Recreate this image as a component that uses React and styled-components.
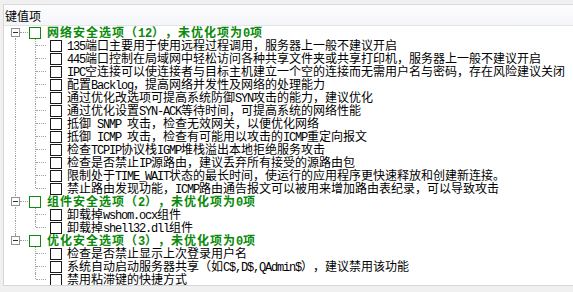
import React from 'react'
import styled, { createGlobalStyle } from 'styled-components'

const GlobalStyle = createGlobalStyle`
  html, body {
    margin: 0;
    padding: 0;
    background: #f0f0f0;
    overflow: hidden;
  }
  body {
    font-family: "Noto Sans CJK SC", "Noto Sans", sans-serif;
    font-size: 12px;
    color: #000;
    text-spacing-trim: space-all;
    font-kerning: none;
  }
`

const Panel = styled.div`
  box-sizing: border-box;
  margin: 4px 0 0 3px;
  height: 282px;
  background: #fff;
  border-top: 1px solid #dadada;
  border-left: 1px solid #d6d6d6;
  border-bottom: 1px solid #d6d6d6;
  overflow: hidden;
`

const Header = styled.div`
  height: 20px;
  display: flex;
  align-items: center;
  padding-left: 1px;
  background: linear-gradient(#fdfdfe, #f4f5f9);
  border-bottom: 1px solid #e4e4e8;
`

const HeaderLabel = styled.span`
  font-size: 12px;
  line-height: 13px;
`

const TreeBody = styled.div`
  padding-top: 0;
`

const Row = styled.div`
  display: flex;
  align-items: flex-start;
  height: 13px;
  white-space: nowrap;
`

const dotted = '1px dotted #a0a0a0'

const GroupGuide = styled.div`
  position: relative;
  flex: none;
  width: 24px;
  height: 13px;
  &::before {
    content: '';
    position: absolute;
    left: 11px;
    top: ${p => (p.$first ? '6px' : '0')};
    bottom: ${p => (p.$last ? '7px' : '0')};
    border-left: ${dotted};
  }
  &::after {
    content: '';
    position: absolute;
    left: 16px;
    top: 6px;
    width: 8px;
    border-top: ${dotted};
  }
`

const Expander = styled.span`
  position: absolute;
  z-index: 1;
  left: 7px;
  top: 2px;
  box-sizing: border-box;
  width: 9px;
  height: 9px;
  background: #fff;
  border: 1px solid #929292;
  &::after {
    content: '';
    position: absolute;
    left: 1px;
    top: 3px;
    width: 5px;
    height: 1px;
    background: #303030;
  }
`

const Pipe = styled.div`
  position: relative;
  flex: none;
  width: 24px;
  height: 13px;
  &::before {
    content: '';
    display: ${p => (p.$show ? 'block' : 'none')};
    position: absolute;
    left: 11px;
    top: 0;
    bottom: 0;
    border-left: ${dotted};
  }
`

const Branch = styled.div`
  position: relative;
  flex: none;
  width: 21px;
  height: 13px;
  &::before {
    content: '';
    position: absolute;
    left: 7px;
    top: 0;
    bottom: ${p => (p.$last ? '7px' : '0')};
    border-left: ${dotted};
  }
  &::after {
    content: '';
    position: absolute;
    left: 8px;
    top: 6px;
    width: 10px;
    border-top: ${dotted};
  }
`

const Check = styled.span`
  flex: none;
  box-sizing: border-box;
  width: 12px;
  height: 12px;
  margin-top: 1px;
  margin-left: 1px;
  background: #fff;
  border: 1px solid ${p => (p.$group ? '#0b8a0b' : '#1a1a1a')};
`

const Label = styled.span`
  margin-left: ${p => (p.$group ? '6px' : '5px')};
  font-size: 12px;
  line-height: 11px;
  font-weight: ${p => (p.$group ? 700 : 400)};
  letter-spacing: ${p => (p.$group ? '1px' : '0')};
  color: ${p => (p.$group ? '#0a8a0a' : '#000')};
`

const Ascii = styled.span`
  font-family: "Liberation Mono", "DejaVu Sans Mono", monospace;
  font-size: 12px;
  letter-spacing: ${p => (p.$group ? '-0.2px' : '-1.2px')};
  white-space: pre;
`

const groups = [
  {
    title: '网络安全选项（12），未优化项为0项',
    items: [
      '135端口主要用于使用远程过程调用，服务器上一般不建议开启',
      '445端口控制在局域网中轻松访问各种共享文件夹或共享打印机，服务器上一般不建议开启',
      'IPC空连接可以使连接者与目标主机建立一个空的连接而无需用户名与密码，存在风险建议关闭',
      '配置Backlog，提高网络并发性及网络的处理能力',
      '通过优化改选项可提高系统防御SYN攻击的能力，建议优化',
      '通过优化设置SYN-ACK等待时间，可提高系统的网络性能',
      '抵御 SNMP 攻击，检查无效网关，以便优化网络',
      '抵御 ICMP 攻击，检查有可能用以攻击的ICMP重定向报文',
      '检查TCPIP协议栈IGMP堆栈溢出本地拒绝服务攻击',
      '检查是否禁止IP源路由，建议丢弃所有接受的源路由包',
      '限制处于TIME_WAIT状态的最长时间，使运行的应用程序更快速释放和创建新连接。',
      '禁止路由发现功能，ICMP路由通告报文可以被用来增加路由表纪录，可以导致攻击',
    ],
  },
  {
    title: '组件安全选项（2），未优化项为0项',
    items: ['卸载掉wshom.ocx组件', '卸载掉shell32.dll组件'],
  },
  {
    title: '优化安全选项（3），未优化项为0项',
    items: [
      '检查是否禁止显示上次登录用户名',
      '系统自动启动服务器共享（如C$,D$,QAdmin$），建议禁用该功能',
      '禁用粘滞键的快捷方式',
    ],
  },
]

// half-width runs get a mono face so they take 6px per char like the original
function Mixed({ text, group }) {
  return text.split(/([\x20-\x7e]+)/).map((part, i) =>
    /^[\x20-\x7e]+$/.test(part)
      ? <Ascii key={i} $group={group}>{part}</Ascii>
      : part
  )
}

export default function App() {
  return (
    <>
      <GlobalStyle />
      <Panel>
        <Header>
          <HeaderLabel>键值项</HeaderLabel>
        </Header>
        <TreeBody>
          {groups.map((g, gi) => {
            const lastGroup = gi === groups.length - 1
            return (
              <React.Fragment key={g.title}>
                <Row>
                  <GroupGuide $first={gi === 0} $last={lastGroup}>
                    <Expander />
                  </GroupGuide>
                  <Check $group />
                  <Label $group><Mixed text={g.title} group /></Label>
                </Row>
                {g.items.map((item, ii) => (
                  <Row key={item}>
                    <Pipe $show={!lastGroup} />
                    <Branch $last={ii === g.items.length - 1} />
                    <Check />
                    <Label><Mixed text={item} /></Label>
                  </Row>
                ))}
              </React.Fragment>
            )
          })}
        </TreeBody>
      </Panel>
    </>
  )
}
